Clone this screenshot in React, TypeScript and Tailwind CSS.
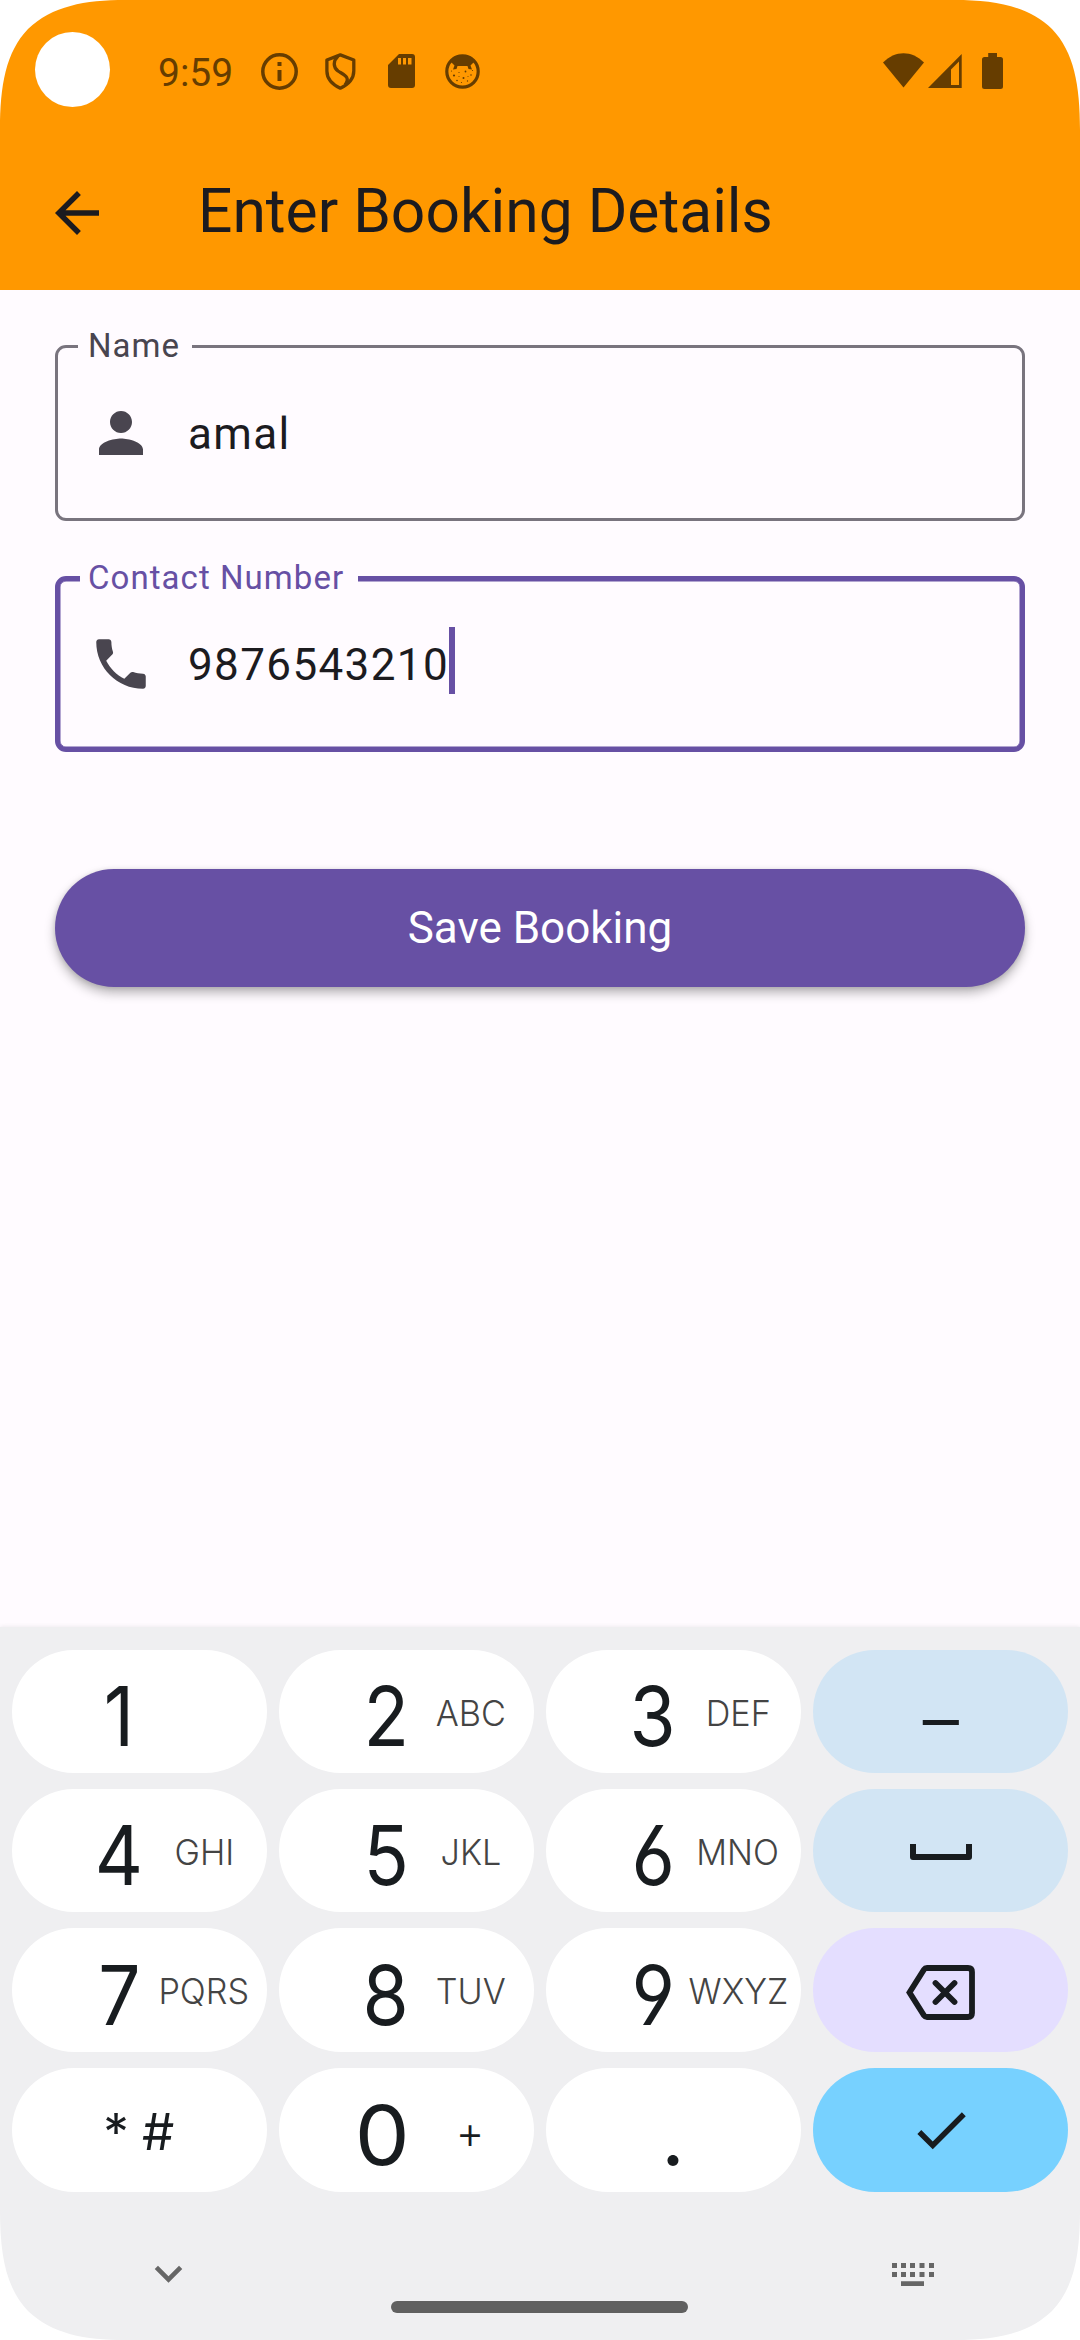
import React from "react";

const INK = "#181c1f";

function Corner({ className }: { className: string }) {
  return (
    <svg className={`absolute size-[130px] ${className}`} viewBox="0 0 130 130">
      <path d="M0 0H125C85 0 52 6 28 29C6 52 0 85 0 130Z" fill="#fff" />
    </svg>
  );
}

function StatusBar() {
  return (
    <div className="flex h-[136px] items-start text-[#663d00]">
      <div className="mt-8 ml-[35px] h-[75px] w-[75px] shrink-0 rounded-full bg-white" />
      <div className="mt-[50px] ml-12 w-[74px] text-[39px] leading-[46px]">9:59</div>
      <svg className="mt-[53px] ml-[29px] h-[37px] w-[37px]" viewBox="0 0 37 37" fill="none" stroke="currentColor">
        <circle cx="18.5" cy="18.5" r="16.7" strokeWidth="3.5" />
        <path d="M18.5 9v4M18.5 17v11" strokeWidth="4" />
      </svg>
      <svg className="mt-[53px] ml-[27px] h-[37px] w-[31px]" viewBox="0 0 31 37" fill="none" stroke="currentColor" strokeWidth="3.3" strokeLinejoin="round">
        <path d="M15.3 1.9 28.8 7v11c0 8-5.600 13.500-13.500 17.200C7.400 31.500 1.900 26 1.900 18V7Z" />
        <path d="M13 3C8 8 8 14 13 18C19 22 26 24 20 32" />
      </svg>
      <svg className="mt-[54px] ml-[32px] h-[34px] w-[27px]" viewBox="0 0 27 34" fill="currentColor">
        <path fillRule="evenodd" d="M11 0H24Q27 0 27 3V31Q27 34 24 34H3Q0 34 0 31V11ZM10 4v6.500h3V4ZM15 4v6.500h3V4ZM20 4v6.500h3.500V4Z" />
      </svg>
      <svg className="mt-[54px] ml-[30px] size-[35px]" viewBox="0 0 35 35">
        <circle cx="17.500" cy="17.500" r="15.700" fill="none" stroke="currentColor" strokeWidth="3.200" />
        <path d="M5.500 7.500 9.500 2.500H25.500L29.500 7.500 25.500 11.500 27 15.500 23.500 15 22.500 12H12.500L11.500 15 8 15.500 9.500 11.500Z" fill="currentColor" />
        <g fill="currentColor">
          <circle cx="9" cy="21.500" r="1.100" />
          <circle cx="20.500" cy="17.500" r=".9" />
          <circle cx="14" cy="18.500" r=".6" />
          <circle cx="18.500" cy="24" r="1" />
          <circle cx="26" cy="21" r=".8" />
          <circle cx="12" cy="26.500" r=".8" />
          <circle cx="22.500" cy="27" r=".7" />
          <circle cx="16.500" cy="28.500" r=".6" />
          <circle cx="6.500" cy="17" r=".6" />
          <circle cx="27.500" cy="16.500" r=".6" />
          <circle cx="14" cy="22.500" r=".5" />
          <circle cx="23" cy="22.500" r=".5" />
        </g>
      </svg>
      <svg className="mt-[53px] ml-auto h-[35px] w-[41px]" viewBox="0 0 41 35" fill="currentColor">
        <path d="M0 9.500C12-3 29-3 41 9.500L20.500 34.500Z" />
      </svg>
      <svg className="mt-[53px] ml-1 h-[35px] w-[34px]" viewBox="0 0 34 35" fill="currentColor">
        <path fillRule="evenodd" d="M33.700 1V35H0ZM31 8.500 23 16.500V32H31Z" />
      </svg>
      <svg className="mt-[53px] mr-[77px] ml-5 h-9 w-[21px]" viewBox="0 0 21 36" fill="currentColor">
        <path d="M6.200 0h8.800v4h3.500Q21 4 21 6.500V33.500Q21 36 18.500 36H2.500Q0 36 0 33.500V6.500Q0 4 2.500 4H6.200Z" />
      </svg>
    </div>
  );
}

function Digit({ n, sub }: { n: string; sub?: string }) {
  const zero = n === "0";
  return (
    <div className="flex h-full items-center rounded-full bg-white">
      <div className={`relative top-[5px] flex w-20 justify-center text-[83px] leading-none text-[#181c1f] ${zero ? "ml-[63px]" : "ml-[67px]"}`}>
        <span className={`inline-block ${zero ? "scale-x-[1.05]" : "scale-x-[0.9]"}`}>{n}</span>
      </div>
      {sub && (
        <div
          className={`relative flex w-[100px] justify-center ${
            zero ? "top-[2px] -ml-[2px] text-[46px] font-[350] text-[#181c1f]" : "top-px -ml-[5px] text-[36px] font-[350] text-[#444]"
          }`}
        >
          <span className="inline-block scale-x-[0.95]">{sub}</span>
        </div>
      )}
    </div>
  );
}

function IconKey({ className, children }: { className: string; children: React.ReactNode }) {
  return <div className={`flex h-full items-center justify-center rounded-full ${className}`}>{children}</div>;
}

function Keypad() {
  return (
    <section className="flex h-[713px] flex-col bg-[#efeff1] pt-[23px] font-['Inter',sans-serif] shadow-[0_0_5px_rgba(0,0,0,0.09)] [font-feature-settings:'cv03','cv04']">
      <div className="grid grid-cols-4 grid-rows-[123px_123px_124px_124px] gap-x-3 gap-y-4 px-3">
        <Digit n="1" />
        <Digit n="2" sub="ABC" />
        <Digit n="3" sub="DEF" />
        <IconKey className="bg-[#d2e5f4]">
          <span className="relative top-[7px] inline-block scale-x-[0.87] text-[83px] leading-none font-[360] text-[#181c1f]">–</span>
        </IconKey>
        <Digit n="4" sub="GHI" />
        <Digit n="5" sub="JKL" />
        <Digit n="6" sub="MNO" />
        <IconKey className="bg-[#d2e5f4]">
          <svg className="mt-[3px] h-4 w-[62px]" viewBox="0 0 62 16" fill="none" stroke={INK} strokeWidth="6" strokeLinejoin="round">
            <path d="M3 0V13H59V0" />
          </svg>
        </IconKey>
        <Digit n="7" sub="PQRS" />
        <Digit n="8" sub="TUV" />
        <Digit n="9" sub="WXYZ" />
        <IconKey className="bg-[#e4deff]">
          <svg className="mt-[5px] h-[55px] w-[69px]" viewBox="0 0 69 55" fill="none" stroke={INK} strokeWidth="5.800" strokeLinejoin="round" strokeLinecap="round">
            <path d="M21 3H62Q66 3 66 7V48Q66 52 62 52H21Q19 52 18 50.500L3.500 27.500 18 4.500Q19 3 21 3Z" strokeLinejoin="miter" />
            <path d="M29.500 18 48.500 37M48.500 18 29.500 37" />
          </svg>
        </IconKey>
        <div className="flex items-center rounded-full bg-white text-[51px] leading-none text-[#181c1f]">
          <span className="mt-[2px] ml-[91px] inline-block w-[26px] text-center">*</span>
          <span className="mt-[3px] ml-[13px] inline-block">#</span>
        </div>
        <Digit n="0" sub="+" />
        <div className="flex items-center rounded-full bg-white">
          <span className="relative top-[5px] ml-[87px] w-20 text-center text-[83px] leading-none text-[#181c1f]">.</span>
        </div>
        <IconKey className="bg-[#77d1ff]">
          <svg className="size-[66px]" viewBox="0 0 24 24" fill={INK}>
            <path d="M9 16.170 4.830 12l-1.420 1.410L9 19 21 7l-1.410-1.410z" />
          </svg>
        </IconKey>
      </div>
      <div className="flex h-[148px] items-start">
        <svg className="mt-[54px] ml-[141px] size-[55px]" viewBox="0 0 24 24" fill="#666">
          <path d="M7.410 8.590 12 13.170l4.590-4.580L18 10l-6 6-6-6z" />
        </svg>
        <div className="mt-[109px] ml-[195px] h-3 w-[297px] rounded-full bg-[#606060]" />
        <svg className="mt-[71px] ml-[204px] h-[23px] w-[42px]" viewBox="0 0 42 23" fill="#666">
          <path d="M0 0h5v5H0zM9 0h5v5H9zM18 0h5v5H18zM27.500 0h5v5H27.500zM37 0h5v5H37zM0 9h5v5H0zM9 9h5v5H9zM18 9h5v5H18zM27.500 9h5v5H27.500zM37 9h5v5H37zM9 18.300h23v4.700H9z" />
        </svg>
      </div>
    </section>
  );
}

export default function App() {
  return (
    <div className="relative flex h-[2340px] w-[1080px] flex-col overflow-hidden bg-[#fffbff] font-['Roboto',sans-serif]">
      <header className="h-[290px] bg-[#ff9800]">
        <StatusBar />
        <div className="flex h-[154px] items-center">
          <svg className="ml-[44px] size-[66px]" viewBox="0 0 24 24" fill="#1c1b1f">
            <path d="M20 11H7.830l5.590-5.590L12 4l-8 8 8 8 1.410-1.410L7.830 13H20v-2z" />
          </svg>
          <h1 className="mb-px ml-[88px] text-[60.500px] text-[#1c1b1f]">Enter Booking Details</h1>
        </div>
      </header>

      <main className="flex flex-1 flex-col px-[55px] pt-[55px]">
        <div className="relative flex h-44 items-center rounded-[11px] border-3 border-[#79747e] pl-[30px]">
          <span className="absolute -top-[22px] left-5 bg-[#fffbff] pr-[12px] pl-[10px] text-[33px] leading-10 tracking-[1.030px] text-[#49454f]">Name</span>
          <svg className="size-[66px]" viewBox="0 0 24 24" fill="#49454f">
            <path d="M12 12c2.210 0 4-1.790 4-4s-1.790-4-4-4-4 1.790-4 4 1.790 4 4 4zm0 2c-2.670 0-8 1.340-8 4v2h16v-2c0-2.660-5.330-4-8-4z" />
          </svg>
          <span className="mt-[2px] ml-[34px] text-[44px] tracking-[1.375px] text-[#1c1b1f]">amal</span>
        </div>

        <div className="relative mt-[55px] flex h-44 items-center rounded-[11px] border-5 border-[#6750a4] pl-7 shadow-[inset_0_0_0_0.5px_#6750a4]">
          <span className="absolute -top-[23px] left-5 bg-[#fffbff] pr-[14px] pl-[8px] text-[33px] leading-10 tracking-[1.060px] text-[#6750a4]">Contact Number</span>
          <svg className="size-[66px]" viewBox="0 0 24 24" fill="#49454f">
            <path d="M6.620 10.790c1.440 2.830 3.760 5.140 6.590 6.590l2.200-2.200c.27-.27.67-.36 1.020-.24 1.120.37 2.330.57 3.570.57.55 0 1 .45 1 1V20c0 .55-.45 1-1 1-9.390 0-17-7.610-17-17 0-.55.45-1 1-1h3.500c.55 0 1 .45 1 1 0 1.250.2 2.450.57 3.570.11.35.03.74-.25 1.020l-2.200 2.200z" />
          </svg>
          <span className="mt-[2px] ml-[34px] text-[44px] tracking-[1.375px] text-[#1c1b1f]">9876543210</span>
          <span className="-mt-[7px] h-[67px] w-[5.500px] bg-[#6750a4]" />
        </div>

        <button className="mt-[117px] flex h-[118px] items-center justify-center rounded-full bg-[#6750a4] pb-px text-[44px] text-white shadow-[0_6px_11px_rgba(0,0,0,0.28),0_1px_5px_rgba(0,0,0,0.12)]">
          Save Booking
        </button>
      </main>

      <Keypad />

      <Corner className="top-0 left-0" />
      <Corner className="top-0 right-0 -scale-x-100" />
      <Corner className="bottom-0 left-0 -scale-y-100" />
      <Corner className="right-0 bottom-0 rotate-180" />
    </div>
  );
}
